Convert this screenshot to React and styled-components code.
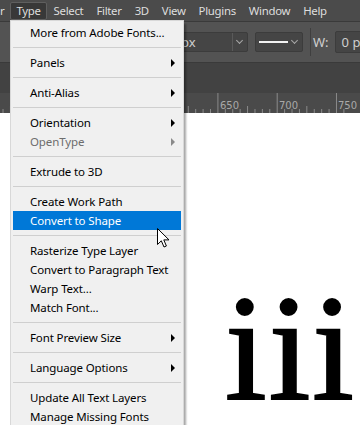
import React from "react";
import styled, { createGlobalStyle } from "styled-components";

const Global = createGlobalStyle`
  html, body {
    margin: 0;
    padding: 0;
    background: #ffffff;
    overflow: hidden;
  }
`;

const menuItems = [
  { label: "More from Adobe Fonts..." },
  { sep: true },
  { label: "Panels", sub: true },
  { sep: true },
  { label: "Anti-Alias", sub: true },
  { sep: true },
  { label: "Orientation", sub: true },
  { label: "OpenType", sub: true, disabled: true },
  { sep: true },
  { label: "Extrude to 3D" },
  { sep: true },
  { label: "Create Work Path" },
  { label: "Convert to Shape", active: true },
  { sep: true },
  { label: "Rasterize Type Layer" },
  { label: "Convert to Paragraph Text" },
  { label: "Warp Text..." },
  { label: "Match Font..." },
  { sep: true },
  { label: "Font Preview Size", sub: true },
  { sep: true },
  { label: "Language Options", sub: true },
  { sep: true },
  { label: "Update All Text Layers" },
  { label: "Manage Missing Fonts" },
];

const topMenus = ["Type", "Select", "Filter", "3D", "View", "Plugins", "Window", "Help"];

function App() {
  return (
    <>
      <Global />
      <Screen>
        <MenuBar>
          <TopItem $cut>r</TopItem>
          {topMenus.map((m) => (
            <TopItem key={m} $open={m === "Type"}>
              {m}
            </TopItem>
          ))}
        </MenuBar>

        <OptionsBar>
          <Dropdown $width={98}>
            <DropText>px</DropText>
            <Chevron />
          </Dropdown>
          <Dropdown $width={48}>
            <StrokeLine />
            <Chevron $plain />
          </Dropdown>
          <VDivider />
          <Label>W:</Label>
          <Field>0 px</Field>
        </OptionsBar>

        <TabStrip />

        <Ruler>
          <svg width="360" height="20" viewBox="0 0 360 20">
            {Array.from({ length: 50 }).map((_, i) => {
              const x = 218 - 59.3 * 4 + i * 7.41;
              const major = i % 8 === 0;
              const mid = i % 8 === 4;
              return (
                <line
                  key={i}
                  x1={x}
                  x2={x}
                  y1={major ? 0 : mid ? 13 : 16}
                  y2={20}
                  stroke="#8a8a8a"
                  strokeWidth="1"
                />
              );
            })}
            <text x="220" y="16" fill="#a8a8a8" fontSize="10" fontFamily="'DejaVu Sans', sans-serif">650</text>
            <text x="279" y="16" fill="#a8a8a8" fontSize="10" fontFamily="'DejaVu Sans', sans-serif">700</text>
            <text x="338" y="16" fill="#a8a8a8" fontSize="10" fontFamily="'DejaVu Sans', sans-serif">750</text>
          </svg>
        </Ruler>

        <Canvas>
          <BigType>iii</BigType>
        </Canvas>

        <DropMenu>
          {menuItems.map((it, i) =>
            it.sep ? (
              <Separator key={i} />
            ) : (
              <Item key={i} $active={it.active} $disabled={it.disabled}>
                <span>{it.label}</span>
                {it.sub && <SubArrow $disabled={it.disabled} />}
              </Item>
            )
          )}
        </DropMenu>

        <Cursor width="13" height="20" viewBox="0 0 13 20">
          <path
            d="M0.5 0.5 L0.5 16.5 L4.3 12.8 L7 19 L9.4 18 L6.8 11.9 L12 11.9 Z"
            fill="#ffffff"
            stroke="#000000"
            strokeWidth="1"
            strokeLinejoin="round"
          />
        </Cursor>
      </Screen>
    </>
  );
}

export default App;

const Screen = styled.div`
  position: relative;
  width: 360px;
  height: 425px;
  overflow: hidden;
  display: flex;
  flex-direction: column;
  background: #ffffff;
  font-family: "Noto Sans", "Open Sans", sans-serif;
`;

const MenuBar = styled.div`
  height: 22px;
  flex: none;
  display: flex;
  align-items: center;
  background: #4b4b4b;
  border-bottom: 1px solid #3a3a3a;
  box-sizing: border-box;
  white-space: nowrap;
`;

const TopItem = styled.div`
  height: 18px;
  display: flex;
  align-items: center;
  padding: ${(p) => (p.$cut ? "0 5px 0 0" : "0 5px")};
  margin: ${(p) => (p.$cut ? "0 0 0 -1px" : "0 1px 0 0")};
  font-size: 11.4px;
  color: #dedede;
  box-sizing: border-box;
  background: ${(p) => (p.$open ? "#383838" : "transparent")};
  border: 1px solid ${(p) => (p.$open ? "#5f5f5f" : "transparent")};
  border-radius: 2px;
  letter-spacing: -0.3px;
`;

const OptionsBar = styled.div`
  height: 40px;
  flex: none;
  display: flex;
  align-items: center;
  padding-left: 150px;
  background: #535353;
  color: #cfcfcf;
  font-size: 13px;
  white-space: nowrap;
`;

const Dropdown = styled.div`
  width: ${(p) => p.$width}px;
  height: 20px;
  flex: none;
  box-sizing: border-box;
  display: flex;
  align-items: center;
  margin-right: 7px;
  background: #454545;
  border: 1px solid #3c3c3c;
  border-radius: 2px;
  padding-left: ${(p) => (p.$width > 60 ? "30px" : "3px")};
`;

const DropText = styled.span`
  flex: 1;
  font-size: 13px;
  color: #cfcfcf;
`;

const Chevron = styled.span`
  width: 14px;
  height: 100%;
  margin-left: auto;
  border-left: ${(p) => (p.$plain ? "none" : "1px solid #5a5a5a")};
  position: relative;
  &::after {
    content: "";
    position: absolute;
    left: 4px;
    top: 5px;
    width: 4px;
    height: 4px;
    border-right: 1px solid #a8a8a8;
    border-bottom: 1px solid #a8a8a8;
    transform: rotate(45deg);
  }
`;

const StrokeLine = styled.span`
  width: 30px;
  height: 2px;
  background: #f2f2f2;
`;

const VDivider = styled.span`
  width: 1px;
  height: 28px;
  flex: none;
  background: #3f3f3f;
  margin-right: 2px;
`;

const Label = styled.span`
  margin-right: 6px;
  font-size: 13px;
`;

const Field = styled.div`
  height: 20px;
  flex: none;
  width: 40px;
  display: flex;
  align-items: center;
  padding-left: 6px;
  background: #454545;
  border: 1px solid #3c3c3c;
  border-radius: 2px;
  font-size: 13px;
`;

const TabStrip = styled.div`
  height: 31px;
  flex: none;
  background: #424242;
  border-top: 1px solid #3a3a3a;
  box-sizing: border-box;
`;

const Ruler = styled.div`
  height: 20px;
  flex: none;
  background: #4a4a4a;
  svg {
    display: block;
  }
`;

const Canvas = styled.div`
  flex: 1;
  display: flex;
  justify-content: flex-end;
  align-items: flex-end;
  padding: 0 4px 0 0;
  background: #ffffff;
`;

const BigType = styled.div`
  font-family: "Liberation Serif", "DejaVu Serif", serif;
  font-weight: 400;
  font-size: 150px;
  line-height: 1;
  color: #000000;
  -webkit-text-stroke: 2px #000000;
  letter-spacing: 2px;
  margin-bottom: 2px;
`;

const DropMenu = styled.div`
  position: absolute;
  left: 10px;
  top: 20px;
  width: 174px;
  padding: 2px 2px 4px;
  box-sizing: border-box;
  background: #f0f0f0;
  border: 1px solid #d8d8d8;
  box-shadow: 3px 3px 2px -1px rgba(0, 0, 0, 0.35);
  font-family: "Noto Sans", "Open Sans", sans-serif;
  font-size: 11.5px;
  letter-spacing: -0.12px;
`;

const Item = styled.div`
  height: 19px;
  display: flex;
  align-items: center;
  padding-left: 17px;
  color: ${(p) => (p.$active ? "#ffffff" : p.$disabled ? "#6d6d6d" : "#000000")};
  background: ${(p) => (p.$active ? "#0078d7" : "transparent")};
  white-space: nowrap;
`;

const SubArrow = styled.span`
  margin-left: auto;
  margin-right: 6px;
  width: 0;
  height: 0;
  border-top: 4px solid transparent;
  border-bottom: 4px solid transparent;
  border-left: 4px solid ${(p) => (p.$disabled ? "#8a8a8a" : "#000000")};
`;

const Separator = styled.div`
  height: 11px;
  display: flex;
  align-items: center;
  &::after {
    content: "";
    flex: 1;
    height: 1px;
    background: #cfcfcf;
  }
`;

const Cursor = styled.svg`
  position: absolute;
  left: 157px;
  top: 228px;
`;
